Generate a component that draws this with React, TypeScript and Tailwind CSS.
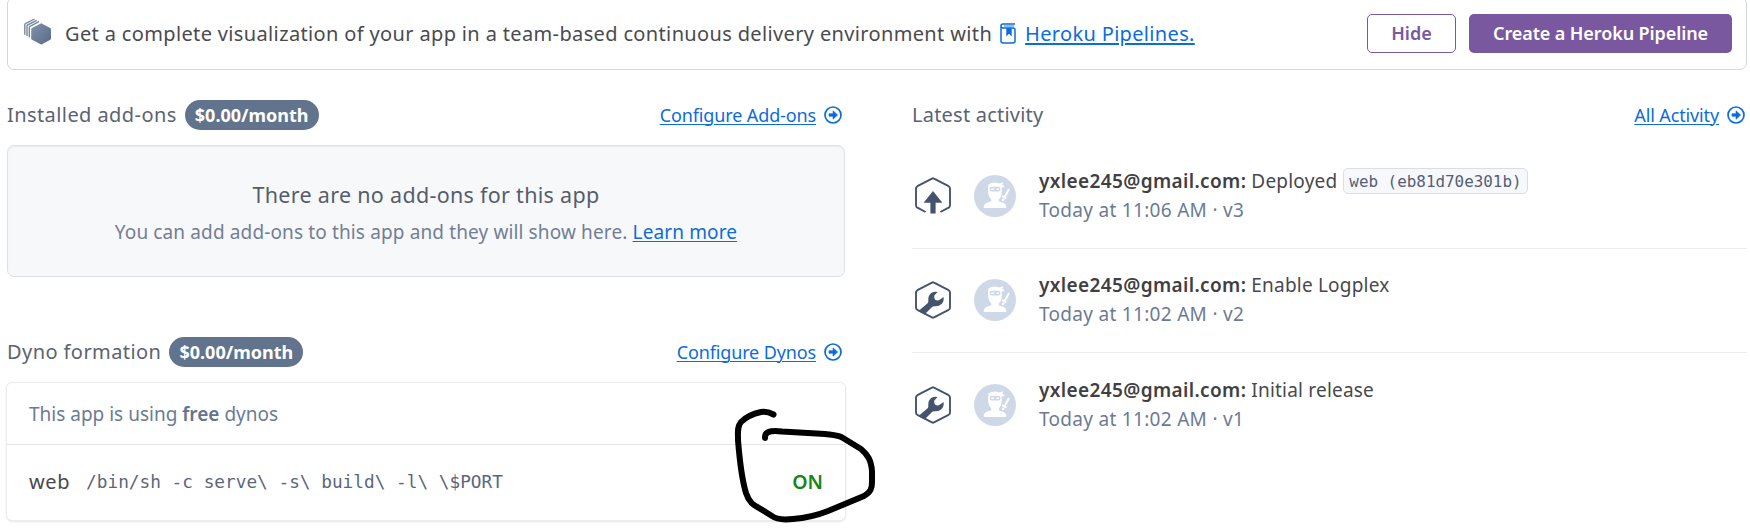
import React from "react";

const HEX = "M17 1.6 Q18 1 19 1.6 L33.6 9.2 Q35 10 35 11.6 V26.4 Q35 28 33.6 28.8 L19 36.4 Q18 37 17 36.4 L2.4 28.8 Q1 28 1 26.4 V11.6 Q1 10 2.4 9.2 Z";

function ArrowIcon() {
  return (
    <svg width="18" height="18" viewBox="0 0 18 18" className="block shrink-0">
      <circle cx="9" cy="9" r="8" fill="none" stroke="#0b6cdb" strokeWidth="1.7" />
      <path d="M5 7.7H9V4.8L13.6 9L9 13.2V10.3H5Z" fill="#0b6cdb" stroke="#0b6cdb" strokeWidth=".6" strokeLinejoin="round" />
    </svg>
  );
}

function PipelineIcon() {
  return (
    <svg width="28" height="31" viewBox="0 0 28 31" className="block shrink-0">
      <defs>
        <linearGradient id="pg" x1="0" y1="0" x2="1" y2="1">
          <stop offset="0" stopColor="#8592a8" />
          <stop offset="1" stopColor="#586a8a" />
        </linearGradient>
      </defs>
      <path d="M17.3 5.3 L26.2 10 Q27 10.5 27 11.4 V20.4 Q27 21.3 26.2 21.8 L18 26.2 Q17.3 26.6 16.6 26.2 L8 21.8 Q7.2 21.3 7.2 20.4 V11.4 Q7.2 10.5 8 10 Z" fill="url(#pg)" />
      <path d="M5.3 19.3V9.4Q5.3 8.7 6 8.4L15 3.7M3 18V8Q3 7.3 3.6 7L12.7 2.3M.8 16.8V6.7Q.8 6 1.4 5.7L10.6 1" fill="none" stroke="#7a88a0" strokeWidth="1.4" />
    </svg>
  );
}

function BookIcon() {
  return (
    <svg width="16" height="21" viewBox="0 0 16 21" className="block shrink-0">
      <path d="M15 1H3Q1 1 1 3V18Q1 20 3 20H13Q15 20 15 18V7Q15 5 13 5H3Q1 5 1 3" fill="none" stroke="#0b6cdb" strokeWidth="1.5" strokeLinejoin="round" />
      <path d="M4 3H14" stroke="#0b6cdb" strokeWidth=".9" />
      <path d="M6.3 5H11.7V13.5L9 10.8L6.300 13.5Z" fill="#0b6cdb" />
    </svg>
  );
}

function DeployIcon() {
  return (
    <svg width="36" height="38" viewBox="0 0 36 38" className="block shrink-0">
      <path d="M10.600 35L2.400 30.600Q1 29.800 1 28.200V11.600Q1 10 2.400 9.200L17 1.600Q18 1 19 1.600L33.600 9.200Q35 10 35 11.600V28.200Q35 29.800 33.600 30.600L25.400 35" fill="none" stroke="#45546c" strokeWidth="1.9" />
      <path d="M18 14L27.400 25.800H20.600V36.500H15.400V25.800H8.600Z" fill="#45546c" />
    </svg>
  );
}

function WrenchIcon() {
  return (
    <svg width="36" height="38" viewBox="0 0 36 38" className="block shrink-0">
      <path d={HEX} fill="none" stroke="#45546c" strokeWidth="1.9" />
      <path d="M3.500 30L12.600 22.300Q13.600 21.200 13.300 19Q13 14.500 16.200 12Q19.200 10.200 22.600 11L19.300 14.600Q18.600 18 20.400 19Q23 20 25 18.500L28.600 16Q29.200 20.400 26.600 23Q24 25.500 19.600 25.200Q17.600 25.200 16.500 26.500L9.500 33.500Z" fill="#45546c" />
    </svg>
  );
}

function Avatar() {
  return (
    <svg width="42" height="42" viewBox="0 0 42 42" className="block shrink-0">
      <circle cx="21" cy="21" r="21" fill="#ced8e7" />
      <path d="M14.2 9.5Q20 6.2 25 8.4L29.5 7.2L28.3 9.8L31 12L27.7 12.5V18Q27.3 22.5 24.8 24.4V26.6Q31.500 27.6 32.400 31.5Q32.400 33 31 33H11Q9.600 33 9.600 31.5Q10.500 27.6 17.300 26.6V24.4Q14.800 22.5 14.200 18Z" fill="#fff" />
      <rect x="15.800" y="11.800" width="10.600" height="4.600" rx="2" fill="#ced8e7" />
      <path d="M17.300 14.200H20M22.400 14.200H25" stroke="#fff" strokeWidth="1.4" />
      <path d="M35 14L30.500 22.500M28 21L32.500 23.500M29.800 23.500L28.600 26" stroke="#fff" strokeWidth="2" />
    </svg>
  );
}

function Badge() {
  return (
    <span className="flex h-[30px] w-[134px] shrink-0 items-center justify-center rounded-full bg-[#62738d] text-[18px] font-bold tracking-normal whitespace-nowrap text-white">
      $0.00/month
    </span>
  );
}

function MoreLink({ children }: { children: React.ReactNode }) {
  return (
    <a className="flex items-center gap-2 text-[18px] tracking-[-0.13px] whitespace-nowrap text-[#0b6cdb]">
      <span className="underline decoration-1 underline-offset-2">{children}</span>
      <ArrowIcon />
    </a>
  );
}

function Row({ icon, action, code, meta }: { icon: React.ReactNode; action: string; code?: string; meta: string }) {
  return (
    <div className="flex h-[104.5px] items-center border-b border-[#ebedf0] pl-[3px] last:border-b-0">
      {icon}
      <div className="ml-[23px]"><Avatar /></div>
      <div className="ml-[23px] text-[19px] leading-[29px] whitespace-nowrap">
        <div className="flex items-center text-[#48484d]">
          <span className="font-semibold tracking-[0.37px] text-[#3f3f44]">yxlee245@gmail.com:</span>
          <span className="ml-[5px] tracking-[0.2px]">{action}</span>
          {code && <code className="ml-[6px] flex h-[26px] items-center rounded-[5px] border border-[#d8dde6] bg-[#f7f8fb] px-[5px] font-['DejaVu_Sans_Mono',monospace] text-[15.9px] text-[#535f76]">{code}</code>}
        </div>
        <div className="tracking-[0.3px] text-[#6b7b94]">{meta}</div>
      </div>
    </div>
  );
}

export default function App() {
  return (
    <div className="relative h-[532px] w-[1750px] overflow-hidden bg-white font-['Noto_Sans',sans-serif]">
      <div className="-mt-[3px] mr-[3px] ml-[7px] flex h-[73px] items-center rounded-[7px] border border-[#cfd7e6] pr-[14px] pl-[16px]">
        <PipelineIcon />
        <p className="ml-[13px] text-[20px] tracking-[0.355px] whitespace-nowrap text-[#4a4a4f]">
          Get a complete visualization of your app in a team-based continuous delivery environment with
        </p>
        <a className="ml-[8px] flex items-center gap-[9px] text-[20px] tracking-[0.33px] whitespace-nowrap text-[#0b6cdb]">
          <BookIcon />
          <span className="underline decoration-2 underline-offset-2">Heroku Pipelines.</span>
        </a>
        <button className="ml-auto h-[39px] w-[89px] rounded-[5px] border border-[#79589f] text-[18px] font-semibold text-[#79589f]">Hide</button>
        <button className="ml-[13px] h-[39px] w-[263px] rounded-[5px] bg-[#79589f] text-[18px] font-semibold tracking-[-0.1px] whitespace-nowrap text-white">Create a Heroku Pipeline</button>
      </div>

      <div className="flex pl-[7px]">
        <div className="w-[838px]">
          <div className="mt-[30px] flex h-[30px] items-center justify-between pr-[3px]">
            <div className="flex items-center gap-[8px] text-[20px] tracking-[0.42px] text-[#5b6372]">
              <span>Installed add-ons</span>
              <Badge />
            </div>
            <MoreLink>Configure Add-ons</MoreLink>
          </div>
          <div className="mt-[15px] flex h-[132px] flex-col items-center justify-center rounded-[7px] border border-[#dfe2e5] bg-[#f7f8fa] pt-[4px] shadow-[inset_0_1px_1px_rgba(0,0,0,0.05)]">
            <div className="text-[21.5px] leading-[38px] tracking-[0.3px] text-[#555d6c]">There are no add-ons for this app</div>
            <div className="text-[19px] leading-[36px] tracking-[0.13px] text-[#727e96]">
              You can add add-ons to this app and they will show here. <a className="text-[#0b6cdb] underline decoration-1 underline-offset-2">Learn more</a>
            </div>
          </div>
          <div className="mt-[60px] flex h-[30px] items-center justify-between pr-[3px]">
            <div className="flex items-center gap-[8px] text-[20px] tracking-[0.42px] text-[#5b6372]">
              <span>Dyno formation</span>
              <Badge />
            </div>
            <MoreLink>Configure Dynos</MoreLink>
          </div>
          <div className="mt-[16px] h-[137px] rounded-[5px] bg-white shadow-[0_0_0_1px_#ececee,0_1px_3px_rgba(0,0,0,0.2)]">
            <div className="flex h-[62px] items-center border-b border-[#e3e5e8] px-[22px] pt-px text-[19px] whitespace-pre text-[#6b7b94]">
              This app is using <b className="font-semibold text-[#62738d]">free</b> dynos
            </div>
            <div className="flex h-[74px] items-center px-[22px]">
              <span className="text-[20px] tracking-[0.6px] text-[#48484d]">web</span>
              <code className="ml-[16px] font-['DejaVu_Sans_Mono',monospace] text-[17.75px] whitespace-pre text-[#5b667c]">{"/bin/sh -c serve\\ -s\\ build\\ -l\\ \\$PORT"}</code>
              <span className="ml-auto text-[19.5px] font-semibold text-[#188515]">ON</span>
            </div>
          </div>
        </div>

        <div className="ml-[67px] w-[835px]">
          <div className="mt-[30px] flex h-[30px] items-center justify-between pr-[2px]">
            <span className="text-[20px] tracking-[0.22px] text-[#5b6372]">Latest activity</span>
            <MoreLink>All Activity</MoreLink>
          </div>
          <div className="mt-[14px]">
            <Row icon={<DeployIcon />} action="Deployed" code="web (eb81d70e301b)" meta="Today at 11:06 AM · v3" />
            <Row icon={<WrenchIcon />} action="Enable Logplex" meta="Today at 11:02 AM · v2" />
            <Row icon={<WrenchIcon />} action="Initial release" meta="Today at 11:02 AM · v1" />
          </div>
        </div>
      </div>

      <svg width="150" height="122" viewBox="730 405 150 122" className="absolute top-[405px] left-[730px]">
        <path d="M773.5 414.500Q767 411 761 412C752 414 745 418 741 422C737 427 738 432 738 440C740 465 742 480 746 493C749 502 753 505 759 508L772 516C777 520 784 520 793 519C806 518 818 515 828 511L864 496C871 492 872 488 872 482V471C871 460 868 455 861 449L843 438C838 435 832 435 825 434L782 431.500Q764 429 765 438" fill="none" stroke="#000" strokeWidth="6" strokeLinecap="round" strokeLinejoin="round" />
      </svg>
    </div>
  );
}
